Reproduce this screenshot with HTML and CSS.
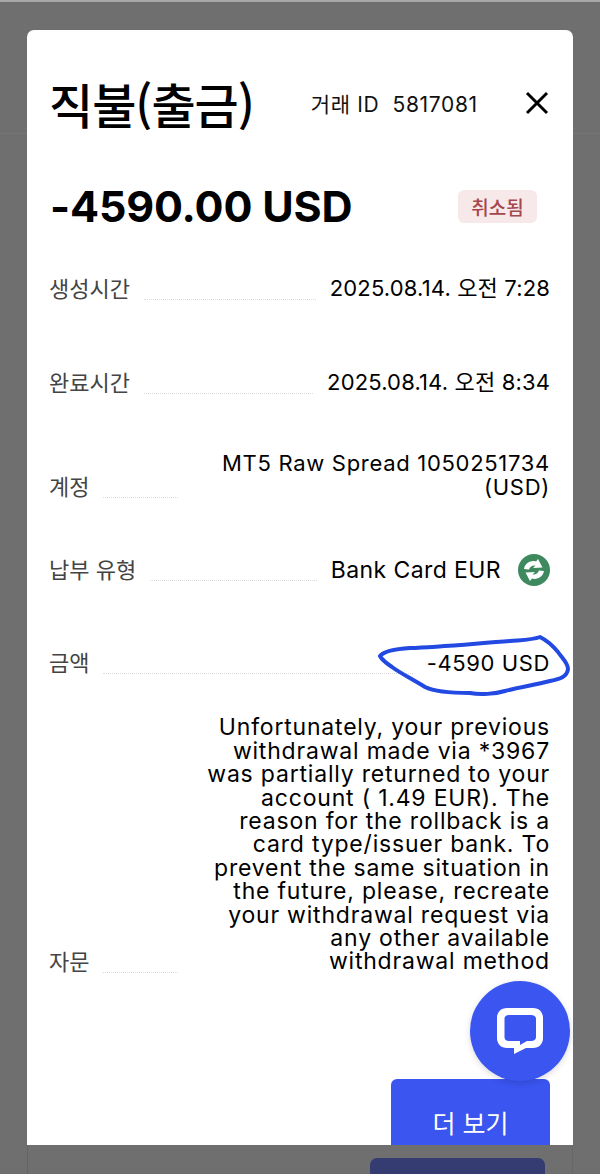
FILE: index.html
```html
<!DOCTYPE html>
<html lang="ko">
<head>
<meta charset="utf-8">
<title>직불(출금)</title>
<link rel="stylesheet" href="styles.css">
</head>
<body>
<div class="page">
  <div class="topline"></div>
  <section class="modal">
    <header class="head">
      <h1 class="title">직불(출금)</h1>
      <div class="txid">거래 ID&nbsp; 5817081</div>
      <svg class="close" viewBox="0 0 24 24" width="24" height="24"><path d="M2 2L22 22M22 2L2 22" fill="none" stroke="#000" stroke-width="3"/></svg>
    </header>
    <div class="amount-row">
      <div class="amount">-4590.00 USD</div>
      <div class="badge">취소됨</div>
    </div>
    <div class="row r1"><span class="label">생성시간</span><span class="dots"></span><span class="value date">2025.08.14. 오전 7:28</span></div>
    <div class="row r2"><span class="label">완료시간</span><span class="dots"></span><span class="value date">2025.08.14. 오전 8:34</span></div>
    <div class="row r3"><span class="label">계정</span><span class="dots"></span><span class="value wide account">MT5 Raw Spread 1050251734<br>(USD)</span></div>
    <div class="row r4"><span class="label">납부 유형</span><span class="dots"></span><span class="value bank">Bank Card EUR</span>
      <svg class="pay-icon" viewBox="0 0 32 32" width="32" height="32">
        <circle cx="16" cy="16" r="16" fill="#3e8a5e"/>
        <path d="M6 15C7 9 13 6 18 7.500L20 5L24.500 13.500L15 14L17.500 11.500C14.500 11 12 12.500 11 15.500Z" fill="#fff"/>
        <path d="M26 17C25 23 19 26 14 24.500L12 27L7.500 18.500L17 18L14.500 20.500C17.500 21 20 19.500 21 16.500Z" fill="#fff"/>
      </svg>
    </div>
    <div class="row r5"><span class="label">금액</span><span class="dots"></span><span class="value sum">-4590 USD</span>
      <svg class="scribble" viewBox="375 630 200 70" width="200" height="70"><path d="M380 655C384 650 395 648 410 647C440 646 480 642 510 640C522 639 532 639 540 636C548 640 553 645 558 651C562 657 568 662 568 668C567 676 560 678 550 680C535 684 520 686 505 690C495 693 480 694 470 692C450 692 435 691 425 686C412 678 400 672 392 666C386 662 382 659 380 655Z" fill="none" stroke="#2249e2" stroke-width="4" stroke-linejoin="round"/></svg>
    </div>
    <div class="row r6"><span class="label">자문</span><span class="dots"></span><span class="value wide note">Unfortunately, your previous<br>withdrawal made via *3967<br>was partially returned to your<br>account ( 1.49 EUR). The<br>reason for the rollback is a<br>card type/issuer bank. To<br>prevent the same situation in<br>the future, please, recreate<br>your withdrawal request via<br>any other available<br>withdrawal method</span></div>
    <div class="actions"><button class="more">더 보기</button></div>
    <button class="chat" aria-label="chat">
      <svg viewBox="0 0 48 48" width="48" height="48"><path fill-rule="evenodd" fill="#fff" d="M11 1H37C43 1 47 5 47 11V31C47 37 43 41 37 41H30L18 47V41H11C5 41 1 37 1 31V11C1 5 5 1 11 1ZM13 8C10 8 8.500 9.500 8.500 12V30C8.500 32.500 10 34 13 34H24V38L31 34H35C38 34 40 32.500 40 30V12C40 9.500 38 8 35 8Z"/></svg>
    </button>
  </section>
  <footer class="foot"><div class="foot-btn"></div></footer>
</div>
</body>
</html>
```
FILE: styles.css
```css
* { box-sizing: border-box; }
html, body { margin: 0; padding: 0; }
body { background: #6f6f6f; font-family: Inter, "Noto Sans CJK KR", sans-serif; color: #000; }
.page { position: relative; height: 1174px; overflow: hidden; padding-top: 30px; }
.topline { position: absolute; left: 0; right: 0; top: 0; height: 2px; background: #a8a8a8; }
.page::after { content: ""; position: absolute; left: 0; right: 0; top: 133px; height: 1px; background: #767676; }
.modal { position: relative; z-index: 1; width: 546px; height: 1115px; margin-left: 27px; padding: 0 23px 0 23px; background: #fff; border-radius: 7px 7px 0 0; overflow: hidden; }
.head { display: flex; align-items: center; height: 64px; margin-top: 41px; }
.title { margin: 0 0 0 -1px; font-size: 48px; line-height: 64px; font-weight: 500; font-family: "Noto Sans CJK KR", sans-serif; letter-spacing: -1px; white-space: nowrap; }
.txid { margin-left: 57px; font-size: 21px; letter-spacing: 0.65px; white-space: nowrap; color: #111; }
.close { margin-left: auto; margin-right: 1px; }
.amount-row { display: flex; align-items: center; justify-content: space-between; margin-top: 40px; height: 62px; padding-right: 13px; }
.amount { font-size: 43px; font-weight: 700; line-height: 62px; letter-spacing: -0.15px; white-space: nowrap; }
.badge { width: 79px; height: 33px; line-height: 33px; text-align: center; border-radius: 6px; background: #f7e9e9; color: #a4484e; font-size: 19px; font-weight: 500; font-family: "Noto Sans CJK KR", sans-serif; }
.row { position: relative; display: flex; align-items: flex-end; }
.r1 { margin-top: 40px; }
.r2 { margin-top: 70px; }
.r3 { margin-top: 57px; }
.r4 { margin-top: 59px; }
.r5 { margin-top: 69px; }
.r6 { margin-top: 41px; }
.label { margin: 0 0 4px -1px; font-size: 22px; line-height: 20px; color: #444; white-space: nowrap; font-family: "Noto Sans CJK KR", sans-serif; }
.dots { flex: 1; height: 1px; margin: 0 14px 1px; border-bottom: 1px dotted #dcdcdc; }
.value { font-size: 22px; line-height: 23.700px; text-align: right; white-space: nowrap; font-family: Inter, "Noto Sans CJK KR", sans-serif; }
.date { letter-spacing: 0.15px; }
.account { letter-spacing: 0.7px; }
.bank { font-size: 23px; letter-spacing: 0.4px; }
.sum { letter-spacing: 0.6px; }
.note { font-size: 23px; line-height: 23.400px; letter-spacing: 0.8px; }
.wide { width: 358px; flex: none; }
.pay-icon { align-self: center; margin: -4px 0 -4px 17px; }
.scribble { position: absolute; right: -25px; top: -20px; }
.actions { position: absolute; right: 23px; top: 1049px; }
.more { display: block; width: 159px; height: 90px; padding: 0 0 4px; border: 0; border-radius: 6px; background: #3a55f0; color: #fff; font-size: 25px; font-family: "Noto Sans CJK KR", sans-serif; }
.chat { position: absolute; left: 443px; top: 951px; display: flex; align-items: center; justify-content: center; width: 100px; height: 100px; padding: 0; border: 0; border-radius: 50%; background: #3a55f0; box-shadow: 0 2px 6px rgba(0,0,0,.15); }
.foot { display: flex; justify-content: flex-end; height: 40px; margin-left: 27px; width: 546px; padding: 13px 27px 0 0; border-left: 1px solid #646464; border-right: 1px solid #676767; }
.foot-btn { width: 175px; height: 40px; background: #343c72; border-radius: 7px 7px 0 0; }
```
